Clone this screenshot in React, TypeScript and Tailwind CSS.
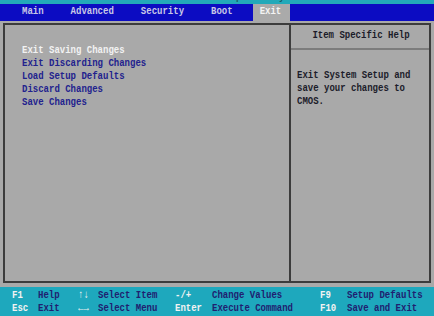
const tabs = ["Main", "Advanced", "Security", "Boot", "Exit"];

const items = [
  "Exit Saving Changes",
  "Exit Discarding Changes",
  "Load Setup Defaults",
  "Discard Changes",
  "Save Changes",
];

const keys = [
  ["F1", "Help", "↑↓", "Select Item", "-/+", "Change Values", "F9", "Setup Defaults"],
  ["Esc", "Exit", "←→", "Select Menu", "Enter", "Execute Command", "F10", "Save and Exit"],
];

const colClasses = [
  "w-[26px] text-[#f2f2f2]",
  "w-[40px] text-[#202070]",
  "w-[20px] text-[#f2f2f2]",
  "w-[77px] text-[#202070]",
  "w-[37px] text-[#f2f2f2]",
  "w-[108px] text-[#202070]",
  "w-[27px] text-[#f2f2f2]",
  "w-[80px] text-[#202070]",
];

export default function App() {
  return (
    <div className="w-[434px] h-[316px] bg-[#a9a9a9] flex flex-col overflow-hidden font-['Liberation_Mono','DejaVu_Sans_Mono',monospace] text-[9px] font-bold">
      {/* title strip, mostly cut off */}
      <div className="h-[4px] bg-[#23a9b9] overflow-hidden flex justify-center">
        <span className="-mt-[8px] text-[#1c5d66] leading-[12px]">PhoenixBIOS Setup Utility</span>
      </div>

      {/* menu bar */}
      <div className="h-[17px] bg-[#0c0cc2] flex items-stretch pl-[15px]">
        {tabs.map((t) => (
          <div
            key={t}
            className={
              t === "Exit"
                ? "flex items-center pl-[7px] pr-[9px] bg-[#aaaaaa] text-[#f4f4f4]"
                : "flex items-center px-[7px] mr-[13px] text-[#c8c8e6]"
            }
          >
            <span className="scale-y-125">{t}</span>
          </div>
        ))}
      </div>

      {/* main box */}
      <div className="flex-1 px-[3px] pt-[2px] pb-[4px]">
        <div className="h-full border-2 border-[#3c3c3c] flex">
          <div className="flex-1 pt-[20px] pl-[17px] flex flex-col">
            {items.map((it, i) => (
              <div
                key={it}
                className={
                  i === 0
                    ? "h-[13px] leading-[13px] text-[#f2f2f2]"
                    : "h-[13px] leading-[13px] text-[#22228e]"
                }
              >
                <span className="inline-block scale-y-125 origin-left">{it}</span>
              </div>
            ))}
          </div>
          <div className="w-[140px] border-l-2 border-[#3c3c3c] flex flex-col">
            <div className="h-[25px] border-b-2 border-[#7c7c7c] flex items-center justify-center text-[#1c1c2a]">
              <span className="scale-y-125 pl-[2px]">Item Specific Help</span>
            </div>
            <div className="pt-[20px] pl-[6px] text-[#1c1c2a]">
              <div className="h-[13px] leading-[13px]"><span className="inline-block scale-y-125">Exit System Setup and</span></div>
              <div className="h-[13px] leading-[13px]"><span className="inline-block scale-y-125">save your changes to</span></div>
              <div className="h-[13px] leading-[13px]"><span className="inline-block scale-y-125">CMOS.</span></div>
            </div>
          </div>
        </div>
      </div>

      {/* footer */}
      <div className="h-[29px] bg-[#1ea8bd] pt-[3px] pl-[12px]">
        {keys.map((row, r) => (
          <div key={r} className="h-[13px] leading-[13px] flex">
            {row.map((c, i) => (
              <span key={i} className={colClasses[i] + " inline-block scale-y-125"}>
                {c}
              </span>
            ))}
          </div>
        ))}
      </div>
    </div>
  );
}
